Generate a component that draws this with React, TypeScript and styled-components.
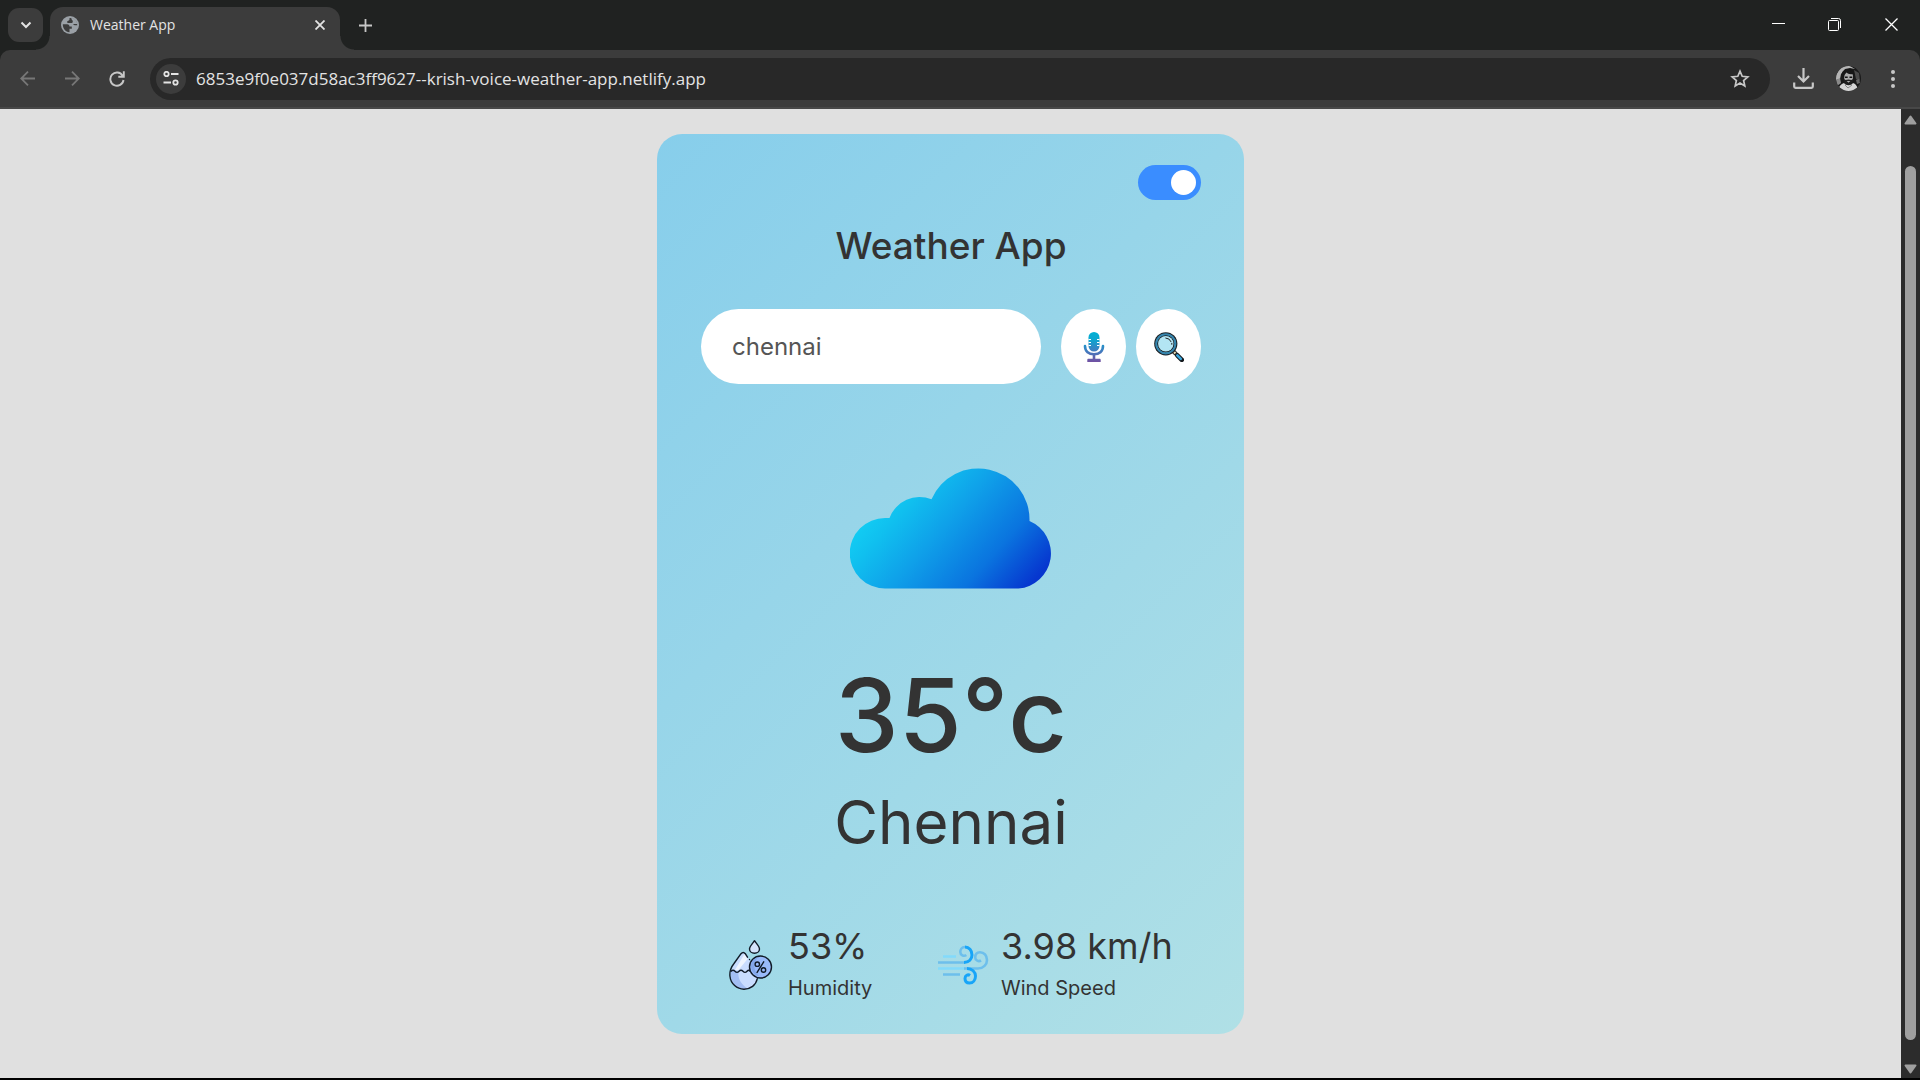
import React, { useState } from "react";
import styled, { createGlobalStyle } from "styled-components";

const GlobalStyle = createGlobalStyle`
  * { box-sizing: border-box; }
  body { margin: 0; background: #000; }
  button, input { font: inherit; color: inherit; border: 0; padding: 0; margin: 0; background: none; }
  svg { display: block; }
`;

const UI_FONT = '"Open Sans", "Noto Sans", sans-serif';
const APP_FONT = 'Inter, "Liberation Sans", sans-serif';

const Window = styled.div`
  display: flex;
  flex-direction: column;
  min-height: 100vh;
  border-bottom: 2px solid #000;
  background: #202221;
  font-family: ${UI_FONT};
`;

const TabStrip = styled.header`
  display: flex;
  height: 50px;
  padding-left: 8px;
`;

const TabSearch = styled.button`
  display: grid;
  place-items: center;
  width: 35px;
  height: 34px;
  margin: 8px 7px 0 0;
  border-radius: 11px;
  background: #3c3c3c;
`;

const Tab = styled.div`
  position: relative;
  display: flex;
  align-items: center;
  width: 290px;
  height: 43px;
  margin-top: 7px;
  padding: 0 10px 7px 11px;
  border-radius: 13px 13px 0 0;
  background: #3c3c3c;
  color: #e3e3e3;
  font-size: 14px;
  line-height: 20px;

  &::before,
  &::after {
    content: "";
    position: absolute;
    bottom: 0;
    width: 14px;
    height: 14px;
  }
  &::before {
    right: 100%;
    background: radial-gradient(circle at 0 0, transparent 13px, #3c3c3c 14px);
  }
  &::after {
    left: 100%;
    background: radial-gradient(circle at 100% 0, transparent 13px, #3c3c3c 14px);
  }
`;

const TabTitle = styled.span`
  flex: 1;
  margin-left: 11px;
`;

const IconButton = styled.button<{ $w: number; $h: number; $c?: string }>`
  display: grid;
  place-items: center;
  flex: none;
  width: ${(p) => p.$w}px;
  height: ${(p) => p.$h}px;
  color: ${(p) => p.$c || "#c7c7c7"};
`;

const WindowControls = styled.div`
  display: flex;
  margin-left: auto;
`;

const Toolbar = styled.nav`
  display: flex;
  align-items: center;
  height: 59px;
  padding: 0 5px;
  border-bottom: 2px solid #484848;
  border-radius: 10px 10px 0 0;
  background: #3c3c3c;
`;

const Omnibox = styled.div`
  display: flex;
  align-items: center;
  flex: 1;
  height: 42px;
  margin: 0 11px;
  padding: 0 8px 0 6px;
  border-radius: 21px;
  background: #282828;
`;

const SiteInfo = styled(IconButton)`
  border-radius: 50%;
  background: #3c3c3c;
`;

const Address = styled.input`
  flex: 1;
  min-width: 0;
  height: 30px;
  margin-left: 10px;
  color: #e3e3e3;
  font-size: 17px;
  outline: none;
`;

const Viewport = styled.div`
  display: flex;
  flex: 1;
  background: #e0e0e0;
`;

const Page = styled.main`
  display: flex;
  justify-content: center;
  align-items: flex-start;
  flex: 1;
  padding: 25px 20px 44px;
`;

const Scrollbar = styled.div`
  display: flex;
  flex-direction: column;
  align-items: center;
  gap: 24px;
  width: 19px;
  padding: 6px 0 4px;
  background: #2c2c2c;
`;

const ScrollTrack = styled.div`
  display: flex;
  flex: 1;
  padding-top: 17px;
`;

const ScrollThumb = styled.div`
  width: 11px;
  border-radius: 6px;
  background: #9f9f9f;
`;

const Card = styled.section`
  width: 100%;
  max-width: 587px;
  padding: 31px 43px 31px 44px;
  border-radius: 25px;
  background: linear-gradient(135deg, #87ceeb, #b0e0e6);
  color: #333;
  font-family: ${APP_FONT};
  text-align: center;
`;

const ToggleRow = styled.div`
  display: flex;
  justify-content: flex-end;
`;

const Toggle = styled.input`
  appearance: none;
  display: flex;
  align-items: center;
  width: 63px;
  height: 35px;
  padding: 0 5px;
  border-radius: 18px;
  background: #ccc;
  cursor: pointer;

  &::before {
    content: "";
    width: 25px;
    height: 25px;
    border-radius: 50%;
    background: #fff;
  }
  &:checked {
    justify-content: flex-end;
    background: #3a8dff;
  }
`;

const Title = styled.h1`
  margin: 18px 0 36px;
  font-size: 37px;
  font-weight: 500;
  line-height: 55px;
`;

const Search = styled.form`
  display: flex;
  gap: 10px;
`;

const CityInput = styled.input`
  flex: 1;
  min-width: 0;
  height: 75px;
  margin-right: 10px;
  padding: 0 31px;
  border-radius: 38px;
  background: #fff;
  color: #555;
  font-size: 24px;
  outline: none;
`;

const RoundButton = styled.button`
  display: grid;
  place-items: center;
  width: 65px;
  height: 75px;
  border-radius: 50%;
  background: #fff;
  cursor: pointer;
`;

const CloudBox = styled.div`
  display: flex;
  justify-content: center;
  padding: 83px 0 66px;
`;

const Temperature = styled.p`
  margin: 0;
  font-size: 102px;
  font-weight: 500;
  line-height: 120px;
`;

const City = styled.h2`
  margin: 7px 0 60px;
  font-size: 60px;
  font-weight: 400;
  line-height: 80px;
`;

const Stats = styled.div`
  display: grid;
  grid-template-columns: 209px 1fr;
  padding-left: 28px;
  text-align: left;
`;

const Stat = styled.div`
  display: flex;
  align-items: center;
  gap: 12px;

  svg {
    margin-top: 4px;
  }
`;

const StatValue = styled.p`
  margin: 0;
  font-size: 36px;
  line-height: 48px;
`;

const StatLabel = styled.p`
  margin: 3px 0 0;
  font-size: 20px;
  line-height: 30px;
`;

const line = (w: number) => ({ fill: "none", stroke: "currentColor", strokeWidth: w });

const Globe = () => (
  <svg width="18" height="18" viewBox="0 0 18 18">
    <circle cx="9" cy="9" r="9" fill="#9aa0a6" />
    <path d="M1.800 8.200h4.400c1.600 0 2.300 1 2.300 2.300h2.300v2.200H8.500V16.200C4.500 16 1.700 12.500 1.800 8.200Z" fill="#3c3c3c" />
    <path d="M8.500 2v1.500c0 1.200-2.500 1-2.500 2.500s3 .9 4.800.9c1.400 0 1.500 2.300 3.200 2.300h2.200C16.500 5 12.500 1.500 8.500 2Z" fill="#3c3c3c" />
    <path d="M10.500 1.800c-.2 2.700 1.300 2 1.300 3.600 0 1.300-1 1.300-1 2.600h5.500C16 4.800 14 2.500 10.500 1.800Z" fill="#9aa0a6" />
  </svg>
);

const Avatar = () => (
  <svg width="25" height="25" viewBox="0 0 25 25">
    <defs>
      <clipPath id="face"><circle cx="12.500" cy="12.500" r="12.500" /></clipPath>
    </defs>
    <g clipPath="url(#face)">
      <rect width="25" height="25" fill="#191919" />
      <path d="M0 9 4 2l5-2h5l5 3-5-1-5 1-4 5-1 5-4 1Z" fill="#b5b5b5" />
      <path d="m18 4 5 3 1 8-4-2Z" fill="#4a4a4a" />
      <path d="M0 14 4 12l1 5-4 3Z" fill="#8a8a8a" />
      <path d="m20 14 3-1 1 4-3 1Z" fill="#666" />
      <ellipse cx="12.500" cy="11" rx="4.500" ry="6.500" fill="#a8a8a8" />
      <path d="M6 10c-1-5 3-7 7-7s6 3 5.500 8L17 8c-3 .5-5 0-6.500-1.500L8.500 9 8 13Z" fill="#161616" />
      <path d="M9 10.500h2.700v1.600H9zm4.500 0h2.700v1.600h-2.700z" fill="#111" />
      <path d="M8 13c1.500 2 3 .5 4.500.5s3 1.500 4.500-.5c0 4-1.500 6.500-4.500 6.500S8 17 8 13Z" fill="#202020" />
      <path d="M10.700 15.300h3.600l-1.800 1.200Z" fill="#ddd" />
      <path d="M2 25c1-5 3-7 6-8 2 3 7 3 9 0 3 1 5 4 5 8Z" fill="#d6d6d6" />
      <path d="m9 19 3 3 4-3" fill="none" stroke="#888" />
    </g>
  </svg>
);

const Mic = () => (
  <svg width="30" height="30" viewBox="0 0 30 30">
    <defs>
      <linearGradient id="mic" x1="0" y1="0" x2="0" y2="30" gradientUnits="userSpaceOnUse">
        <stop offset="0" stopColor="#00b0d4" />
        <stop offset=".25" stopColor="#0ca6d0" />
        <stop offset=".6" stopColor="#3b80c2" />
        <stop offset="1" stopColor="#7250a2" />
      </linearGradient>
    </defs>
    <rect x="9.500" y="0" width="11" height="19.500" rx="5.500" fill="url(#mic)" />
    <path d="M6 14c0 5.500 3.800 8.200 9 8.200s9-2.700 9-8.200" fill="none" stroke="url(#mic)" strokeWidth="2.600" strokeLinecap="round" />
    <path d="M13.700 22h2.600v4.800h4.200c.8 0 1.200.5 1.200 1.200v2H8.300v-2c0-.7.400-1.200 1.200-1.200h4.200Z" fill="url(#mic)" />
    <path d="M9.500 7.500H12M18 7.500h2.500M9.500 10.500H12M18 10.500h2.500M9.500 13.500H12M18 13.500h2.500" stroke="#fff" strokeWidth="1" />
  </svg>
);

const Magnifier = () => (
  <svg width="30" height="30" viewBox="0 0 30 30">
    <path d="m19 19 3 3" stroke="#1c2226" strokeWidth="4" />
    <path d="m20 20 1.500 1.500" stroke="#e5d7ae" strokeWidth="2.400" />
    <path d="m23.300 23.300 4.500 4.500" stroke="#14191d" strokeWidth="4.600" strokeLinecap="round" />
    <path d="m23.300 23.300 3.500 3.500" stroke="#3aa6dc" strokeWidth="2.600" strokeLinecap="round" />
    <circle cx="11.800" cy="11.800" r="11.600" fill="#1b1f23" />
    <circle cx="11.800" cy="11.800" r="9.500" fill="none" stroke="#3585ad" strokeWidth="2.200" />
    <circle cx="11.800" cy="11.800" r="8.300" fill="#1b1f23" />
    <circle cx="11.800" cy="11.800" r="7.700" fill="#b3e5f3" />
    <path d="M11.800 6a5.900 5.900 0 0 1 5.200 3.600M17.800 11.300v1" fill="none" stroke="#222" strokeWidth="1" strokeLinecap="round" />
  </svg>
);

const Cloud = () => (
  <svg width="203" height="122" viewBox="0 0 203 122" role="img" aria-label="Clouds">
    <defs>
      <linearGradient id="sky" x1="24" y1="36" x2="152" y2="150" gradientUnits="userSpaceOnUse">
        <stop offset="0" stopColor="#12cff4" />
        <stop offset=".15" stopColor="#10c0ef" />
        <stop offset=".4" stopColor="#0fa0e9" />
        <stop offset=".72" stopColor="#0a74df" />
        <stop offset="1" stopColor="#0636cf" />
      </linearGradient>
    </defs>
    <path
      fill="url(#sky)"
      d="M35 121.500A35 35 0 0 1 35 51H39.500A32 32 0 0 1 81.500 32.300A51.100 51.100 0 0 1 179.500 54A35.200 35.200 0 0 1 168.500 121.500Z"
    />
  </svg>
);

const HumidityIcon = () => (
  <svg width="47" height="50" viewBox="0 0 47 50" fill="none" stroke="#111b28" strokeWidth="1.400" strokeLinecap="round" strokeLinejoin="round">
    <path d="M14 12.500 5.500 23.500C-2 35 4 49.300 15.500 49.300 24 49.300 30 42 28.500 34L18 16Z" fill="#c9ddff" stroke="none" />
    <path d="M1.500 31h8c-1 7 2 13 9 17.500C8 50.500.5 43 1.500 31Z" fill="#a3bef3" stroke="none" />
    <path d="m14 16.500 1.500-2.500 3 5-9 11H6Z" fill="#eef5ff" stroke="none" />
    <path d="M12 13.700 5 23.500C.5 29 .7 32.500.9 36 1.700 44 8 49.200 15 49.200c6.500 0 12-4 13.300-10.500M12 13.700c1.500-1.700 3-1.700 4.300 0l2.200 3.500M20.500 19.500v.1" />
    <path d="M2 31.300q2-2.200 4 0t4 0 4 0 4 0 3 0" />
    <path d="M25.500.8c-2.300 3-5 5.700-5 8.200a5 4.200 0 0 0 10 0c0-2.500-2.700-5.200-5-8.200Z" fill="#d5e4fc" />
    <circle cx="31.500" cy="27" r="11" fill="#99bafa" />
    <path d="M22 26c0-4.500 3-8 7-8.500-5 5-5 13 1 18.500-4.500-.5-8-5-8-10Z" fill="#83a7eb" stroke="none" />
    <path d="m34.700 21.800-6.600 10.600" />
    <circle cx="28.300" cy="24.200" r="2.200" />
    <circle cx="34.500" cy="30" r="2.200" />
  </svg>
);

const WindIcon = () => (
  <svg width="51" height="40" viewBox="0 0 51 40" fill="none" strokeWidth="2.600">
    <path d="M5 11.500h13M0 23.500h27" stroke="#83dafb" />
    <path d="M0 17.500h27M5 29.500h17" stroke="#6dbfec" />
    <path d="M26 23.500h14c5.500 0 9-4 9-8.500s-3-7.800-7-7.800-4.800 3-4.800 5.200c0 3 3.500 4.600 5.800 3" stroke="#6dbfec" />
    <path d="M26 17.500c5 0 8-3.500 8-7.500 0-4.500-3-8-7-8" stroke="#18a5f8" strokeWidth="3" />
    <path d="M27 2c-3.500 0-4.700 3-4.700 5 0 3 3.500 4.800 6 3" stroke="#6dbfec" />
    <path d="M29 23.500c5 0 8.500 3.500 8.500 7.500s-2.500 7-6 7-4.500-2.500-4.500-4.500c0-3 3-4.500 5-3" stroke="#18a5f8" strokeWidth="3" />
  </svg>
);

export default function App() {
  const [on, setOn] = useState(true);
  const [city, setCity] = useState("chennai");
  return (
    <>
      <GlobalStyle />
      <Window>
        <TabStrip>
          <TabSearch aria-label="Search tabs">
            <svg width="12" height="8" viewBox="0 0 12 8"><path d="m1.500 1.500 4.500 4.500 4.500-4.500" {...line(2)} stroke="#e3e3e3" /></svg>
          </TabSearch>
          <Tab>
            <Globe />
            <TabTitle>Weather App</TabTitle>
            <IconButton $w={20} $h={20} $c="#e3e3e3" aria-label="Close tab">
              <svg width="10" height="10" viewBox="0 0 10 10"><path d="m.5.5 9 9M9.500.5l-9 9" {...line(1.8)} /></svg>
            </IconButton>
          </Tab>
          <IconButton $w={50} $h={50} aria-label="New tab">
            <svg width="13" height="13" viewBox="0 0 13 13"><path d="M6.500 0v13M0 6.500h13" {...line(1.8)} /></svg>
          </IconButton>
          <WindowControls>
            <IconButton $w={56} $h={47} $c="#fff" aria-label="Minimize">
              <svg width="13" height="13" viewBox="0 0 13 13"><path d="M0 6.500h13" {...line(1)} /></svg>
            </IconButton>
            <IconButton $w={56} $h={49} $c="#fff" aria-label="Restore">
              <svg width="13" height="13" viewBox="0 0 13 13"><rect x=".5" y="2.500" width="10" height="10" rx="1" {...line(1)} /><path d="M3 .5h7.500a2 2 0 0 1 2 2V10" {...line(1)} /></svg>
            </IconButton>
            <IconButton $w={58} $h={49} $c="#fff" aria-label="Close window">
              <svg width="13" height="13" viewBox="0 0 13 13"><path d="m.5.5 12 12M12.500.5l-12 12" {...line(1.3)} /></svg>
            </IconButton>
          </WindowControls>
        </TabStrip>

        <Toolbar>
          <IconButton $w={44} $h={44} $c="#777" aria-label="Back">
            <svg width="15" height="15" viewBox="0 0 15 15"><path d="M15 7.500H1.500M8 .7 1.200 7.500 8 14.300" {...line(1.8)} /></svg>
          </IconButton>
          <IconButton $w={46} $h={44} $c="#777" aria-label="Forward">
            <svg width="15" height="15" viewBox="0 0 15 15"><path d="M0 7.500h13.500M7 .7l6.800 6.800L7 14.300" {...line(1.8)} /></svg>
          </IconButton>
          <IconButton $w={44} $h={44} aria-label="Reload">
            <svg width="16" height="16" viewBox="0 0 16 16"><path d="M13.600 4.700A6.600 6.600 0 1 0 14.500 9M14.800.3v5.400H9.300" {...line(1.9)} /></svg>
          </IconButton>
          <Omnibox>
            <SiteInfo $w={30} $h={30} $c="#e3e3e3" aria-label="View site information">
              <svg width="16" height="15" viewBox="0 0 16 15"><circle cx="3.500" cy="3" r="2.200" {...line(1.8)} /><circle cx="12.500" cy="11.500" r="2.200" {...line(1.8)} /><path d="M8 3h7.500M.5 11.500H8" {...line(1.8)} /></svg>
            </SiteInfo>
            <Address aria-label="Address" defaultValue="6853e9f0e037d58ac3ff9627--krish-voice-weather-app.netlify.app" spellCheck={false} />
            <IconButton $w={44} $h={40} aria-label="Bookmark this tab">
              <svg width="20" height="19" viewBox="0 0 20 19"><path d="m10 2.200 2.200 5.100 5.600.5-4.200 3.700 1.200 5.400L10 14l-4.800 2.900 1.200-5.400-4.200-3.700 5.600-.5Z" {...line(1.7)} /></svg>
            </IconButton>
          </Omnibox>
          <IconButton $w={44} $h={44} aria-label="Downloads">
            <svg width="21" height="21" viewBox="0 0 21 21"><path d="M10.500 0v13M5 8l5.500 5.500L16 8M1.200 14.500v4a1.300 1.300 0 0 0 1.300 1.300h16a1.300 1.300 0 0 0 1.300-1.300v-4" {...line(2.2)} /></svg>
          </IconButton>
          <IconButton $w={46} $h={44} aria-label="Profile"><Avatar /></IconButton>
          <IconButton $w={44} $h={44} aria-label="Menu">
            <svg width="4" height="18" viewBox="0 0 4 18" fill="currentColor"><circle cx="2" cy="2" r="2" /><circle cx="2" cy="9" r="2" /><circle cx="2" cy="16" r="2" /></svg>
          </IconButton>
        </Toolbar>

        <Viewport>
          <Page>
            <Card>
              <ToggleRow>
                <Toggle type="checkbox" role="switch" aria-label="Theme" checked={on} onChange={(e) => setOn(e.target.checked)} />
              </ToggleRow>
              <Title>Weather App</Title>
              <Search onSubmit={(e) => e.preventDefault()}>
                <CityInput aria-label="City" value={city} onChange={(e) => setCity(e.target.value)} spellCheck={false} />
                <RoundButton type="button" aria-label="Speak"><Mic /></RoundButton>
                <RoundButton type="submit" aria-label="Search"><Magnifier /></RoundButton>
              </Search>
              <CloudBox><Cloud /></CloudBox>
              <Temperature>35°c</Temperature>
              <City>Chennai</City>
              <Stats>
                <Stat>
                  <HumidityIcon />
                  <div>
                    <StatValue>53%</StatValue>
                    <StatLabel>Humidity</StatLabel>
                  </div>
                </Stat>
                <Stat>
                  <WindIcon />
                  <div>
                    <StatValue>3.98 km/h</StatValue>
                    <StatLabel>Wind Speed</StatLabel>
                  </div>
                </Stat>
              </Stats>
            </Card>
          </Page>
          <Scrollbar>
            <svg width="13" height="10" viewBox="0 0 13 10"><path d="M6.500 1.500 11.500 8.500H1.500Z" fill="#9f9f9f" stroke="#9f9f9f" strokeWidth="2" strokeLinejoin="round" /></svg>
            <ScrollTrack><ScrollThumb /></ScrollTrack>
            <svg width="13" height="10" viewBox="0 0 13 10"><path d="M6.500 8.500 1.500 1.500h10Z" fill="#9f9f9f" stroke="#9f9f9f" strokeWidth="2" strokeLinejoin="round" /></svg>
          </Scrollbar>
        </Viewport>
      </Window>
    </>
  );
}
